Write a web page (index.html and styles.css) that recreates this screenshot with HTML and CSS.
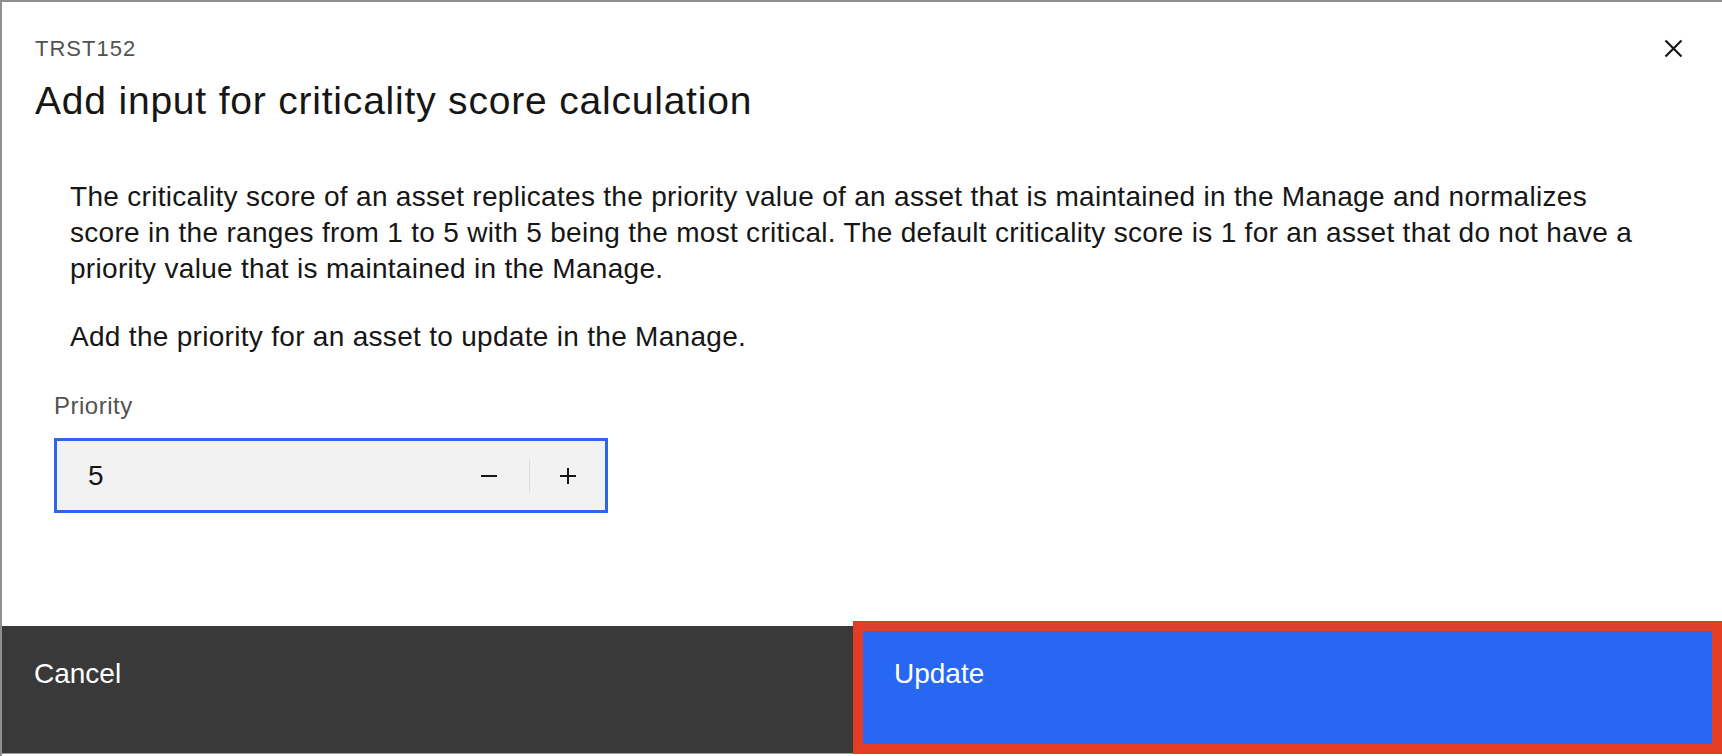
FILE: index.html
```html
<!DOCTYPE html>
<html lang="en">
<head>
<meta charset="utf-8">
<title>Add input for criticality score calculation</title>
<link rel="stylesheet" href="styles.css">
</head>
<body>
<div class="modal">
  <div class="modal-main">
    <header class="modal-header">
      <div class="modal-heading">
        <p class="modal-label">TRST152</p>
        <h2 class="modal-title">Add input for criticality score calculation</h2>
      </div>
      <button class="modal-close" aria-label="Close">
        <svg width="19" height="19" viewBox="0 0 19 19"><path d="M1.5 1.5 L17.5 17.5 M17.5 1.5 L1.5 17.5" stroke="#161616" stroke-width="2.2" fill="none"/></svg>
      </button>
    </header>
    <div class="modal-body">
      <p class="body-text">The criticality score of an asset replicates the priority value of an asset that is maintained in the Manage and normalizes score in the ranges from 1 to 5 with 5 being the most critical. The default criticality score is 1 for an asset that do not have a priority value that is maintained in the Manage.</p>
      <p class="body-text body-text-second">Add the priority for an asset to update in the Manage.</p>
    </div>
    <div class="field">
      <label class="field-label">Priority</label>
      <div class="number-input">
        <span class="number-value">5</span>
        <div class="number-controls">
          <button class="step-btn step-down" aria-label="Decrement">
            <svg width="18" height="18" viewBox="0 0 18 18"><path d="M1 9 H17" stroke="#161616" stroke-width="2" fill="none"/></svg>
          </button>
          <span class="step-divider"></span>
          <button class="step-btn step-up" aria-label="Increment">
            <svg width="18" height="18" viewBox="0 0 18 18"><path d="M1 9 H17 M9 1 V17" stroke="#161616" stroke-width="2" fill="none"/></svg>
          </button>
        </div>
      </div>
    </div>
  </div>
  <footer class="modal-footer">
    <button class="btn btn-secondary">Cancel</button>
    <button class="btn btn-primary">Update</button>
  </footer>
  <div class="modal-bottom"></div>
  <div class="highlight"></div>
</div>
</body>
</html>
```

FILE: styles.css
```css
* { box-sizing: border-box; }
html, body { margin: 0; padding: 0; }
body {
  background: #ffffff;
  font-family: "Liberation Sans", Arial, sans-serif;
  color: #161616;
  width: 1722px;
  height: 756px;
  overflow: hidden;
}
.modal {
  position: relative;
  height: 756px;
  border-top: 2px solid #8f8f8f;
  border-left: 2px solid #8f8f8f;
  display: flex;
  flex-direction: column;
  background: #ffffff;
}
.modal-main {
  flex: 1;
  display: flex;
  flex-direction: column;
}
.modal-header {
  display: flex;
  justify-content: space-between;
  align-items: flex-start;
  padding: 33px 0 0 33px;
}
.modal-label {
  margin: 0;
  font-size: 22px;
  line-height: 28px;
  letter-spacing: 1px;
  color: #525252;
}
.modal-title {
  margin: 14px 0 0;
  font-size: 39px;
  line-height: 48px;
  font-weight: 400;
  letter-spacing: 0.8px;
  color: #161616;
}
.modal-close {
  margin: 4px 39px 0 0;
  padding: 0;
  width: 19px;
  height: 19px;
  border: 0;
  background: none;
  display: flex;
}
.modal-body {
  margin-top: 54px;
  padding-left: 68px;
  width: 1660px;
}
.body-text {
  margin: 0;
  font-size: 28px;
  line-height: 36px;
  letter-spacing: 0.3px;
  color: #161616;
}
.body-text-second { margin-top: 32px; }
.field {
  margin-top: 36px;
  padding-left: 52px;
  display: flex;
  flex-direction: column;
  align-items: flex-start;
}
.field-label {
  font-size: 24px;
  line-height: 30px;
  letter-spacing: 0.5px;
  color: #525252;
}
.number-input {
  margin-top: 17px;
  width: 554px;
  height: 75px;
  border: 3px solid #2d67e8;
  background: #f2f2f2;
  display: flex;
  align-items: center;
  justify-content: space-between;
  padding-left: 31px;
}
.number-value {
  font-size: 28px;
  line-height: 36px;
}
.number-controls {
  display: flex;
  align-items: center;
  height: 100%;
}
.step-btn {
  border: 0;
  background: none;
  padding: 0;
  height: 100%;
  display: flex;
  align-items: center;
  justify-content: center;
}
.step-down { width: 80px; }
.step-up { width: 75px; }
.step-divider {
  width: 1px;
  height: 32px;
  background: #dcdcdc;
}
.modal-footer {
  height: 127px;
  display: flex;
}
.btn {
  flex: 1;
  border: 0;
  margin: 0;
  padding: 30px 32px 0;
  text-align: left;
  font-family: "Liberation Sans", Arial, sans-serif;
  font-size: 28px;
  line-height: 36px;
  color: #ffffff;
  display: flex;
  align-items: flex-start;
}
.btn-secondary { background: #393939; }
.btn-primary { background: #2767f3; }
.modal-bottom {
  height: 3px;
  border-top: 1px solid #9a9a9a;
  background: #ffffff;
}
.highlight {
  position: absolute;
  left: 851px;
  top: 619px;
  width: 869px;
  height: 133px;
  border: 10px solid #e23d25;
  pointer-events: none;
}
```
